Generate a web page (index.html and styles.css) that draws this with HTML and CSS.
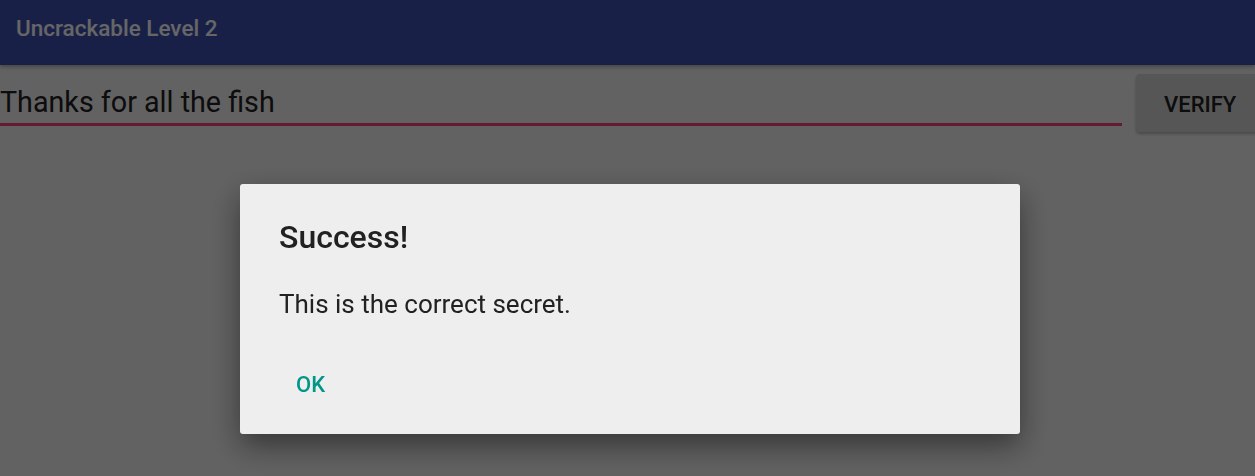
FILE: index.html
```html
<!DOCTYPE html>
<html lang="en">
  <head>
    <meta charset="UTF-8" />
    <title>Uncrackable Level 2</title>
    <link rel="stylesheet" href="styles.css">
  </head>
  <body>
    <header class="toolbar">
      <h1 class="toolbar__title">Uncrackable Level 2</h1>
    </header>
    <main class="content">
      <div class="field">
        <input class="field__input" type="text" value="Thanks for all the fish" />
      </div>
      <button class="btn-verify">VERIFY</button>
    </main>

    <div class="scrim">
      <div class="dialog">
        <h2 class="dialog__title">Success!</h2>
        <p class="dialog__message">This is the correct secret.</p>
        <div class="dialog__actions">
          <button class="dialog__btn">OK</button>
        </div>
      </div>
    </div>
  </body>
</html>
```

FILE: styles.css
```css
* {
  box-sizing: border-box;
}

html,
body {
  height: 100%;
}

body {
  margin: 0;
  background: #f5f5f5;
  font-family: Roboto, 'Noto Sans', sans-serif;
  overflow: hidden;
}

.toolbar {
  height: 65px;
  background: #3f51b5;
  display: flex;
  align-items: center;
  padding: 0 16px;
  box-shadow: 0 2px 4px rgba(0, 0, 0, 0.3);
}

.toolbar__title {
  margin: 0 0 10px;
  font-size: 22.5px;
  font-weight: 500;
  color: #fff;
}

.content {
  display: flex;
  align-items: flex-start;
  gap: 14px;
  padding-top: 9px;
}

.field {
  flex: 1;
  padding-top: 11px;
}

.field__input {
  width: 100%;
  border: none;
  border-bottom: 3px solid #ff4081;
  background: transparent;
  font-family: inherit;
  font-size: 28.7px;
  color: #212121;
  padding: 0 0 4px;
  outline: none;
}

.btn-verify {
  width: 130px;
  height: 58px;
  margin-right: -11px;
  border: none;
  border-radius: 4px;
  background: #d6d7d7;
  box-shadow: 0 2px 3px rgba(0, 0, 0, 0.25);
  font-family: inherit;
  font-size: 22px;
  font-weight: 500;
  color: #212121;
  text-align: left;
  padding: 2px 0 0 28px;
}

.scrim {
  position: fixed;
  inset: 0;
  background: rgba(0, 0, 0, 0.6);
}

.dialog {
  position: absolute;
  left: 240px;
  top: 184px;
  width: 780px;
  height: 250px;
  background: #eeeeee;
  border-radius: 3px;
  box-shadow: 0 12px 30px rgba(0, 0, 0, 0.45);
  padding: 34px 39px 0;
}

.dialog__title {
  margin: 0;
  font-size: 32px;
  font-weight: 500;
  color: #212121;
}

.dialog__message {
  margin: 33px 0 0;
  font-size: 26px;
  color: #212121;
}

.dialog__actions {
  margin-top: 53px;
}

.dialog__btn {
  border: none;
  background: transparent;
  font-family: inherit;
  font-size: 22px;
  font-weight: 500;
  color: #009688;
  padding: 0 0 0 17px;
}
```
